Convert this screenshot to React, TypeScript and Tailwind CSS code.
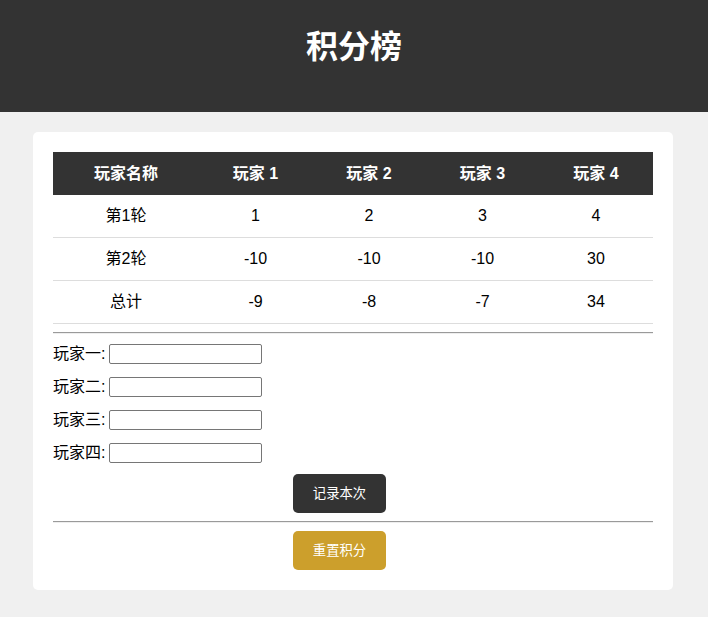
import React from "react";

const rows = [
  { name: "第1轮", vals: ["1", "2", "3", "4"] },
  { name: "第2轮", vals: ["-10", "-10", "-10", "30"] },
  { name: "总计", vals: ["-9", "-8", "-7", "34"] },
];

const players = ["玩家一", "玩家二", "玩家三", "玩家四"];

export default function App() {
  return (
    <div
      className="min-h-[617px] bg-[#f0f0f0] text-black text-[16px]"
      style={{ fontFamily: '"Liberation Sans", "Noto Sans CJK SC", sans-serif' }}
    >
      <header className="h-[112px] bg-[#333333] pt-[29px]">
        <h1 className="text-center text-[32px] leading-[37px] font-bold text-white">积分榜</h1>
      </header>
      <main className="ml-[33px] mt-[20px] w-[640px] rounded-[5px] bg-white p-[20px]">
        <table className="w-[600px] border-collapse table-fixed">
          <colgroup>
            <col className="w-[146px]" />
            <col className="w-[113px]" />
            <col className="w-[114px]" />
            <col className="w-[113px]" />
            <col className="w-[114px]" />
          </colgroup>
          <thead>
            <tr className="bg-[#333333] text-white">
              <th className="p-[12px] text-center font-bold leading-[19px]">玩家名称</th>
              <th className="p-[12px] text-center font-bold leading-[19px]">玩家 1</th>
              <th className="p-[12px] text-center font-bold leading-[19px]">玩家 2</th>
              <th className="p-[12px] text-center font-bold leading-[19px]">玩家 3</th>
              <th className="p-[12px] text-center font-bold leading-[19px]">玩家 4</th>
            </tr>
          </thead>
          <tbody>
            {rows.map((r) => (
              <tr key={r.name} className="border-b border-[#dddddd]">
                <td className="p-[12px] text-center leading-[18px]">{r.name}</td>
                {r.vals.map((v, i) => (
                  <td key={i} className="p-[12px] text-center leading-[18px]">
                    {v}
                  </td>
                ))}
              </tr>
            ))}
          </tbody>
        </table>
        <hr className="mt-[8px] border-t border-b border-t-[#9a9a9a] border-b-[#eeeeee]" />
        <div className="mt-[10px] flex flex-col gap-[13px]">
          {players.map((p) => (
            <div key={p} className="flex h-[20px] items-center">
              <span className="leading-[20px]">{p}:</span>
              <input
                type="text"
                className="ml-[4px] h-[20px] w-[153px] rounded-[2px] border border-[#767676] bg-white px-[2px] text-[13px]"
              />
            </div>
          ))}
        </div>
        <button className="mt-[11px] ml-[240px] block h-[39px] w-[93px] rounded-[5px] bg-[#333333] text-[13.33px] text-white">
          记录本次
        </button>
        <hr className="mt-[8px] border-t border-b border-t-[#9a9a9a] border-b-[#eeeeee]" />
        <button className="mt-[8px] ml-[240px] block h-[39px] w-[93px] rounded-[5px] bg-[#cc9f2c] text-[13.33px] text-white">
          重置积分
        </button>
      </main>
    </div>
  );
}
